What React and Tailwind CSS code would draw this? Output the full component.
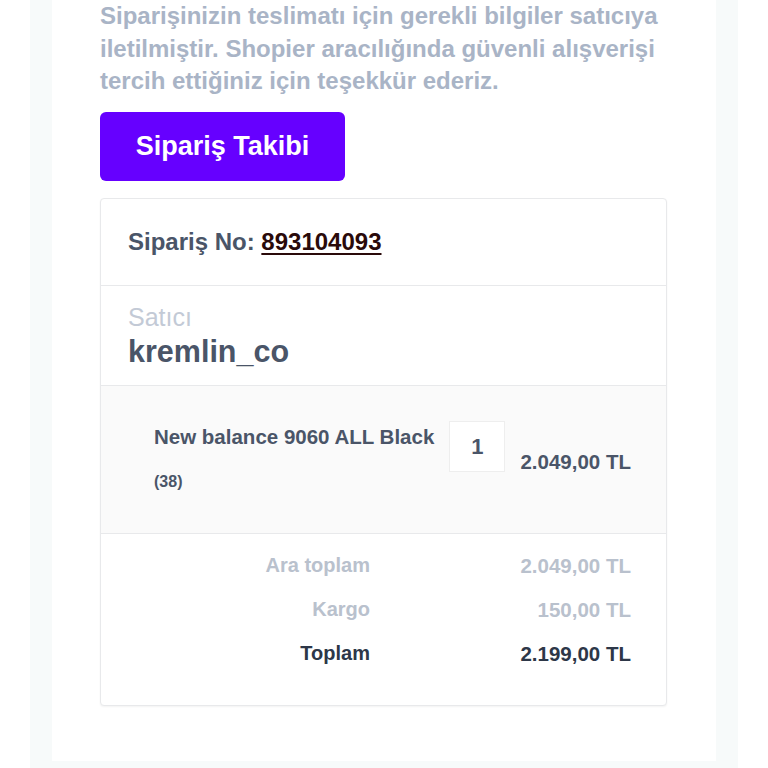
export default function App() {
  const font = { fontFamily: '"Liberation Sans", Arial, sans-serif' };
  return (
    <div className="min-h-[768px] bg-white px-[30px]" style={font}>
      <div className="bg-[#f7fafa] px-[22px] pb-[12px]">
        <div className="bg-white pl-[48px] pr-[49px] pb-[55px]">
          <p className="text-[24px] leading-[32.5px] font-bold text-[#a9b4c6]">
            Siparişinizin teslimatı için gerekli bilgiler satıcıya iletilmiştir. Shopier aracılığında güvenli alışverişi tercih ettiğiniz için teşekkür ederiz.
          </p>
          <div className="mt-[14px] flex">
            <a className="flex h-[69px] w-[245px] items-center justify-center rounded-[6px] bg-[#6600ff] text-[27px] font-bold text-white">
              Sipariş Takibi
            </a>
          </div>
          <div className="mt-[17px] rounded-[4px] border border-[#e8e9eb] bg-white shadow-[0_1px_2px_rgba(0,0,0,0.05)]">
            <div className="flex h-[87px] items-center border-b border-[#e8e9eb] px-[27px] text-[24px] font-bold text-[#4a5568]">
              <span>Sipariş No:&nbsp;</span>
              <span className="text-[#2a0a0a] underline decoration-2 underline-offset-[3px]">893104093</span>
            </div>
            <div className="border-b border-[#e8e9eb] px-[27px] pt-[18px] pb-[17px]">
              <div className="text-[25px] leading-[26px] text-[#c3cad6]">Satıcı</div>
              <div className="mt-[4px] text-[30.5px] leading-[34px] font-bold text-[#4a5568]">kremlin_co</div>
            </div>
            <div className="flex h-[148px] items-start border-b border-[#e8e9eb] bg-[#fafafa] pl-[53px] pr-[35px] pt-[35px]">
              <div className="flex-1">
                <div className="text-[20.5px] leading-[32px] font-bold text-[#4a5568]">New balance 9060 ALL Black</div>
                <div className="mt-[19px] text-[16px] leading-[20px] font-bold text-[#4a5568]">(38)</div>
              </div>
              <div className="ml-[12px] flex h-[51px] w-[56px] shrink-0 items-center justify-center border border-[#eeeeee] bg-white text-[22px] font-bold text-[#4a5568]">
                1
              </div>
              <div className="ml-[15px] mt-[30px] shrink-0 text-[20.5px] leading-[22px] font-bold text-[#4a5568]">2.049,00 TL</div>
            </div>
            <div className="px-[35px] pt-[20px] pb-[40px] text-[20.5px] font-bold">
              <div className="grid grid-cols-[234px_1fr] gap-y-[21px] leading-[23px]">
                <div className="text-right text-[20px] text-[#b9c1cd]">Ara toplam</div>
                <div className="text-right text-[#b9c1cd]">2.049,00 TL</div>
                <div className="text-right text-[20px] text-[#b9c1cd]">Kargo</div>
                <div className="text-right text-[#b9c1cd]">150,00 TL</div>
                <div className="text-right text-[20px] text-[#2d3748]">Toplam</div>
                <div className="text-right text-[#2d3748]">2.199,00 TL</div>
              </div>
            </div>
          </div>
        </div>
      </div>
    </div>
  );
}
